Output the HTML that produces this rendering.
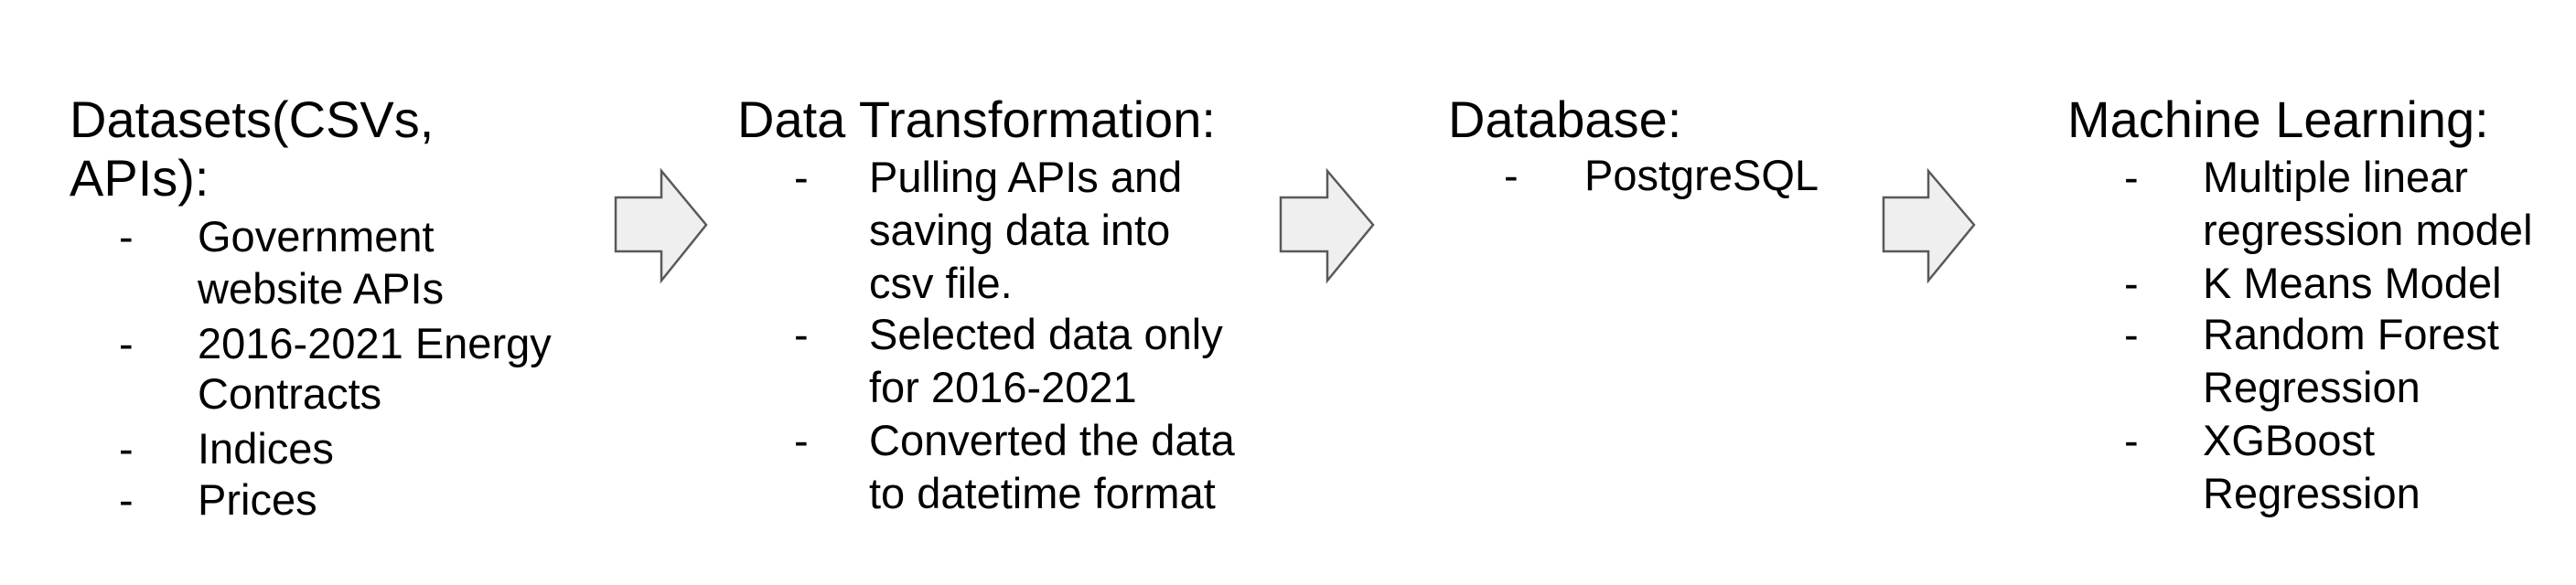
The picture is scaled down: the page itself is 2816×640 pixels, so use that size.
<!DOCTYPE html>
<html><head><meta charset="utf-8"><style>
html,body{margin:0;padding:0;background:#fff;}
body{width:2816px;height:640px;position:relative;overflow:hidden;font-family:"Liberation Sans",Arial,sans-serif;color:#000;}
.t{position:absolute;font-size:56px;line-height:1;white-space:nowrap;}
.b{position:absolute;font-size:47px;line-height:1;white-space:nowrap;}
svg{position:absolute;left:0;top:0;}
</style></head><body>
<svg width="2816" height="640">
<g fill="#efefef" stroke="#595959" stroke-width="2.5" stroke-linejoin="miter">
<polygon points="673,216 723,216 723,187 772,246 723,307 723,275 673,275"/>
<polygon points="1400,216 1451,216 1451,187 1501,246 1451,307 1451,275 1400,275"/>
<polygon points="2059,216 2108,216 2108,187 2158,246 2108,307 2108,275 2059,275"/>
</g>
</svg>

<div class="t" style="left:76px;top:103px">Datasets(CSVs,</div>
<div class="t" style="left:76px;top:167px">APIs):</div>
<div class="b" style="left:130px;top:235px">-</div><div class="b" style="left:216px;top:235px">Government</div>
<div class="b" style="left:216px;top:292px">website APIs</div>
<div class="b" style="left:130px;top:352px">-</div><div class="b" style="left:216px;top:352px">2016-2021 Energy</div>
<div class="b" style="left:216px;top:407px">Contracts</div>
<div class="b" style="left:130px;top:467px">-</div><div class="b" style="left:216px;top:467px">Indices</div>
<div class="b" style="left:130px;top:523px">-</div><div class="b" style="left:216px;top:523px">Prices</div>

<div class="t" style="left:806px;top:103px">Data Transformation:</div>
<div class="b" style="left:868px;top:170px">-</div><div class="b" style="left:950px;top:170px">Pulling APIs and</div>
<div class="b" style="left:950px;top:228px">saving data into</div>
<div class="b" style="left:950px;top:286px">csv file.</div>
<div class="b" style="left:868px;top:342px">-</div><div class="b" style="left:950px;top:342px">Selected data only</div>
<div class="b" style="left:950px;top:400px">for 2016-2021</div>
<div class="b" style="left:868px;top:458px">-</div><div class="b" style="left:950px;top:458px">Converted the data</div>
<div class="b" style="left:950px;top:516px">to datetime format</div>

<div class="t" style="left:1583px;top:103px">Database:</div>
<div class="b" style="left:1644px;top:168px">-</div><div class="b" style="left:1732px;top:168px">PostgreSQL</div>

<div class="t" style="left:2260px;top:103px">Machine Learning:</div>
<div class="b" style="left:2322px;top:170px">-</div><div class="b" style="left:2408px;top:170px">Multiple linear</div>
<div class="b" style="left:2408px;top:228px">regression model</div>
<div class="b" style="left:2322px;top:286px">-</div><div class="b" style="left:2408px;top:286px">K Means Model</div>
<div class="b" style="left:2322px;top:342px">-</div><div class="b" style="left:2408px;top:342px">Random Forest</div>
<div class="b" style="left:2408px;top:400px">Regression</div>
<div class="b" style="left:2322px;top:458px">-</div><div class="b" style="left:2408px;top:458px">XGBoost</div>
<div class="b" style="left:2408px;top:516px">Regression</div>
</body></html>
